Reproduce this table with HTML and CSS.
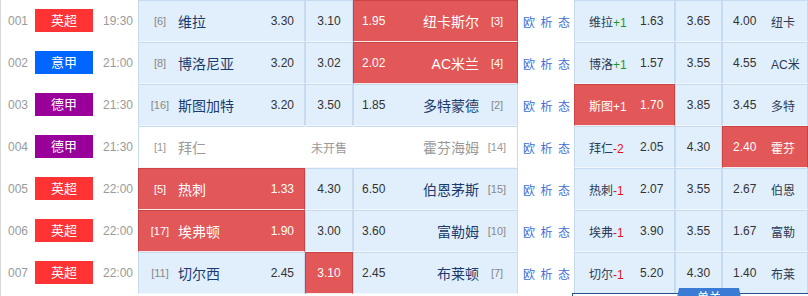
FILE: index.html
```html
<!DOCTYPE html>
<html lang="zh-CN">
<head>
<meta charset="utf-8">
<title>赛事列表</title>
<link rel="stylesheet" href="styles.css">
</head>
<body>
<div class="board">
  <div class="row">
    <div class="num">001</div>
    <div class="lg"><span class="badge epl">英超</span></div>
    <div class="time">19:30</div>
    <div class="cell home"><span class="rk">[6]</span><span class="team">维拉</span><span class="odd">3.30</span></div>
    <div class="cell draw">3.10</div>
    <div class="cell away hot"><span class="odd">1.95</span><span class="team">纽卡斯尔</span><span class="rk">[3]</span></div>
    <div class="links"><a>欧</a><a>析</a><a>态</a></div>
    <div class="cell hc"><span class="hn">维拉<i class="up">+1</i></span><span>1.63</span></div>
    <div class="cell draw">3.65</div>
    <div class="cell ha"><span class="ho">4.00</span><span class="hn2">纽卡</span></div>
  </div>
  <div class="row">
    <div class="num">002</div>
    <div class="lg"><span class="badge sa">意甲</span></div>
    <div class="time">21:00</div>
    <div class="cell home"><span class="rk">[8]</span><span class="team">博洛尼亚</span><span class="odd">3.20</span></div>
    <div class="cell draw">3.02</div>
    <div class="cell away hot"><span class="odd">2.02</span><span class="team">AC米兰</span><span class="rk">[4]</span></div>
    <div class="links"><a>欧</a><a>析</a><a>态</a></div>
    <div class="cell hc"><span class="hn">博洛<i class="up">+1</i></span><span>1.57</span></div>
    <div class="cell draw">3.55</div>
    <div class="cell ha"><span class="ho">4.55</span><span class="hn2">AC米</span></div>
  </div>
  <div class="row">
    <div class="num">003</div>
    <div class="lg"><span class="badge bl">德甲</span></div>
    <div class="time">21:30</div>
    <div class="cell home"><span class="rk">[16]</span><span class="team">斯图加特</span><span class="odd">3.20</span></div>
    <div class="cell draw">3.50</div>
    <div class="cell away"><span class="odd">1.85</span><span class="team">多特蒙德</span><span class="rk">[2]</span></div>
    <div class="links"><a>欧</a><a>析</a><a>态</a></div>
    <div class="cell hc hot"><span class="hn">斯图<i class="up">+1</i></span><span>1.70</span></div>
    <div class="cell draw">3.85</div>
    <div class="cell ha"><span class="ho">3.45</span><span class="hn2">多特</span></div>
  </div>
  <div class="row">
    <div class="num">004</div>
    <div class="lg"><span class="badge bl">德甲</span></div>
    <div class="time">21:30</div>
    <div class="cell home ns"><span class="rk">[1]</span><span class="team">拜仁</span></div>
    <div class="cell draw ns">未开售</div>
    <div class="cell away ns"><span class="team">霍芬海姆</span><span class="rk">[14]</span></div>
    <div class="links"><a>欧</a><a>析</a><a>态</a></div>
    <div class="cell hc"><span class="hn">拜仁<i class="dn">-2</i></span><span>2.05</span></div>
    <div class="cell draw">4.30</div>
    <div class="cell ha hot"><span class="ho">2.40</span><span class="hn2">霍芬</span></div>
  </div>
  <div class="row">
    <div class="num">005</div>
    <div class="lg"><span class="badge epl">英超</span></div>
    <div class="time">22:00</div>
    <div class="cell home hot"><span class="rk">[5]</span><span class="team">热刺</span><span class="odd">1.33</span></div>
    <div class="cell draw">4.30</div>
    <div class="cell away"><span class="odd">6.50</span><span class="team">伯恩茅斯</span><span class="rk">[15]</span></div>
    <div class="links"><a>欧</a><a>析</a><a>态</a></div>
    <div class="cell hc"><span class="hn">热刺<i class="dn">-1</i></span><span>2.07</span></div>
    <div class="cell draw">3.55</div>
    <div class="cell ha"><span class="ho">2.67</span><span class="hn2">伯恩</span></div>
  </div>
  <div class="row">
    <div class="num">006</div>
    <div class="lg"><span class="badge epl">英超</span></div>
    <div class="time">22:00</div>
    <div class="cell home hot"><span class="rk">[17]</span><span class="team">埃弗顿</span><span class="odd">1.90</span></div>
    <div class="cell draw">3.00</div>
    <div class="cell away"><span class="odd">3.60</span><span class="team">富勒姆</span><span class="rk">[10]</span></div>
    <div class="links"><a>欧</a><a>析</a><a>态</a></div>
    <div class="cell hc"><span class="hn">埃弗<i class="dn">-1</i></span><span>3.90</span></div>
    <div class="cell draw">3.55</div>
    <div class="cell ha"><span class="ho">1.67</span><span class="hn2">富勒</span></div>
  </div>
  <div class="row">
    <div class="num">007</div>
    <div class="lg"><span class="badge epl">英超</span></div>
    <div class="time">22:00</div>
    <div class="cell home"><span class="rk">[11]</span><span class="team">切尔西</span><span class="odd">2.45</span></div>
    <div class="cell draw hot">3.10</div>
    <div class="cell away"><span class="odd">2.45</span><span class="team">布莱顿</span><span class="rk">[7]</span></div>
    <div class="links"><a>欧</a><a>析</a><a>态</a></div>
    <div class="cell hc"><span class="hn">切尔<i class="dn">-1</i></span><span>5.20</span></div>
    <div class="cell draw">4.30</div>
    <div class="cell ha"><span class="ho">1.40</span><span class="hn2">布莱</span></div>
  </div>
</div>
<div class="slip">
  <div class="slip-tab">单关</div>
</div>
</body>
</html>
```

FILE: styles.css
```css
* { box-sizing: border-box; }
html, body { margin: 0; padding: 0; background: #fff; }
body {
  font-family: "Liberation Sans", "Noto Sans CJK SC", sans-serif;
  font-size: 12px;
  color: #333;
  width: 808px;
  height: 296px;
  overflow: hidden;
  position: relative;
}
.board {
  border-left: 1px solid #d9d9d9;
  height: 296px;
}
.row {
  display: grid;
  grid-template-columns: 28px 70px 39px 167px 48px 165px 56px 101px 47px 86px;
  height: 42px;
}
.num {
  display: flex;
  align-items: center;
  padding-left: 7px;
  color: #9a9a9a;
}
.lg {
  display: flex;
  align-items: center;
  justify-content: center;
}
.badge {
  display: block;
  width: 58px;
  height: 23px;
  line-height: 23px;
  margin-top: -1px;
  text-align: center;
  color: #fff;
  font-size: 13px;
}
.badge.epl { background: #ff3333; }
.badge.sa { background: #0066ff; }
.badge.bl { background: #990099; }
.time {
  display: flex;
  align-items: center;
  justify-content: center;
  color: #9a9a9a;
  padding-right: 1px;
}
.cell {
  display: flex;
  align-items: center;
  background: #e1effc;
  border: 1px solid #c6daf0;
  border-bottom-color: #f2f7fd;
}
.cell.hot {
  background: #e25757;
  border-color: #c94545;
  border-bottom-color: #f6eaea;
  color: #fff;
}
.home { padding: 0 10px 0 3px; }
.away { padding: 0 2px 0 8px; }
.draw { justify-content: center; }
.rk {
  width: 36px;
  flex: none;
  text-align: center;
  color: #888;
  font-size: 11px;
}
.team {
  font-size: 14px;
  color: #1b3b6f;
}
.home .odd { margin-left: auto; }
.away .team { margin-left: auto; }
.hot .rk, .hot .team, .hot i { color: #fff; }
.cell.ns {
  background: #fff;
  color: #999;
}
.ns .rk, .ns .team { color: #999; }
.home.ns { border-right-color: #fff; }
.draw.ns { border-left-color: #fff; border-right-color: #fff; }
.away.ns { border-left-color: #fff; }
.links {
  display: flex;
  align-items: center;
  gap: 5.5px;
  padding-left: 5px;
}
.links a {
  color: #3f6fd6;
  font-size: 12px;
  cursor: pointer;
}
.hc { padding-left: 14px; }
.hn {
  width: 51px;
  flex: none;
  color: #2b3a55;
}
.hot .hn, .hot .hn2 { color: #fff; }
.hn i, .hn2 i { font-style: normal; }
.up { color: #1a9a1a; }
.dn { color: #e81010; }
.ha { padding-left: 10px; }
.ho { width: 38px; flex: none; }
.hn2 { color: #2b3a55; }
.slip {
  position: absolute;
  left: 572px;
  top: 293px;
  width: 240px;
  height: 60px;
  border: 1px solid #24508f;
  background: #fff;
}
.slip-tab {
  position: absolute;
  left: 102px;
  top: -6px;
  width: 68px;
  height: 20px;
  line-height: 20px;
  text-align: center;
  color: #fff;
  font-size: 12px;
  background: #3a7bd5;
  clip-path: polygon(4px 0, 64px 0, 68px 100%, 0 100%);
}
```
